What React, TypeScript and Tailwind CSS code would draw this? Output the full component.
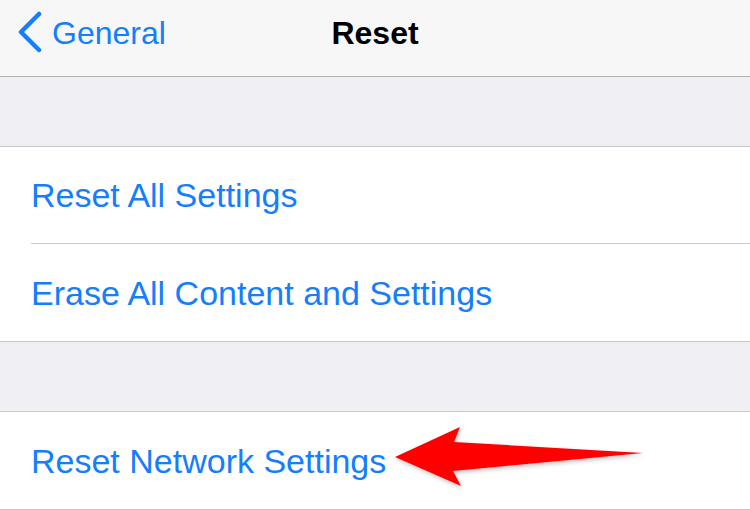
const font = { fontFamily: '"Liberation Sans", Arial, sans-serif' }

const rows = [['Reset All Settings', 'Erase All Content and Settings'], ['Reset Network Settings']]

const Row = ({ label, last }: { label: string; last: boolean }) => (
  <div className="bg-white pl-[31px]">
    <div className={`flex h-[97px] items-center ${last ? '' : 'border-b border-[#c8c7cc]'}`}>
      <span className="text-[34px] leading-none text-[#157efb]">{label}</span>
    </div>
  </div>
)

export default function App() {
  return (
    <div className="relative h-[510px] w-[750px] overflow-hidden bg-[#efeff4]" style={font}>
      <header className="relative flex h-[77px] items-center border-b border-[#b2b2b2] bg-[#f7f7f7] pb-[10px]">
        <div className="flex items-center pl-[17px]">
          <svg width="26" height="42" viewBox="0 0 26 42" className="mt-[-2px]">
            <path d="M22 3 L4 21 L22 39" fill="none" stroke="#157efb" strokeWidth="4.5" strokeLinecap="round" strokeLinejoin="round" />
          </svg>
          <span className="ml-[9px] text-[32px] leading-none text-[#157efb]">General</span>
        </div>
        <h1 className="absolute left-1/2 -translate-x-1/2 text-[32px] font-bold leading-none text-black">Reset</h1>
      </header>

      {rows.map((group, gi) => (
        <div key={gi} className="pt-[69px]">
          <div className="border-y border-[#c8c7cc]">
            {group.map((label, i) => (
              <Row key={label} label={label} last={i === group.length - 1} />
            ))}
          </div>
        </div>
      ))}

      <svg className="pointer-events-none absolute left-0 top-0" width="750" height="510">
        <defs>
          <filter id="sh" x="-10%" y="-30%" width="120%" height="160%">
            <feDropShadow dx="1" dy="2" stdDeviation="2" floodColor="#000" floodOpacity="0.25" />
          </filter>
        </defs>
        <path
          d="M395 457 L460 427 L454 442 L643 453 L453 471 L461 486 Z"
          fill="#ff0000"
          filter="url(#sh)"
        />
      </svg>
    </div>
  )
}
